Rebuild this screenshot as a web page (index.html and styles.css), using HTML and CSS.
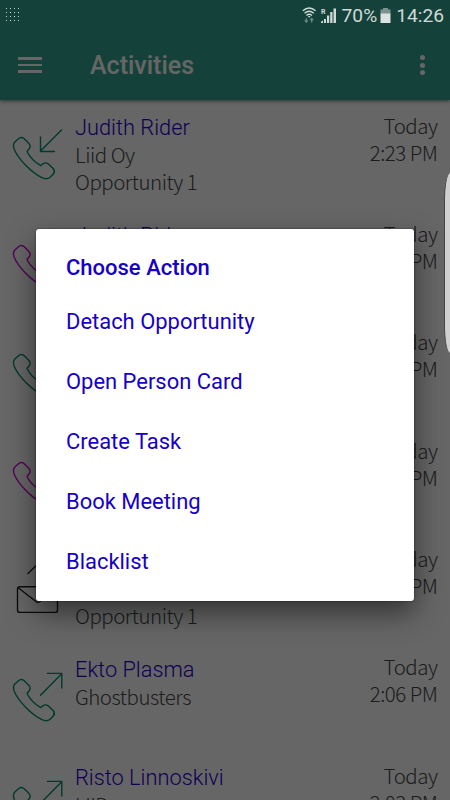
FILE: index.html
```html
<!DOCTYPE html>
<html lang="en">
<head>
<meta charset="utf-8">
<title>Activities</title>
<link rel="stylesheet" href="styles.css">
</head>
<body>
<svg width="0" height="0" class="defs" aria-hidden="true">
  <defs>
    <path id="phone" transform="translate(.5 -.5)" d="M14.1 41.8 L17.7 38.4 Q20.5 35.8 23.5 38 L28 42.6 Q31 45.7 28.5 48.6 Q26.8 50 26.6 51.2 C29 56 35 62 40.3 65.2 C41.5 63.5 43 62.1 45.6 62.4 Q47.5 62.8 49 64.5 L52.8 68.3 Q55 71 52.8 73.6 L49.6 76.8 Q46 79.5 41.5 77.2 C30 71.5 18 58.5 13.8 49 Q12 44.5 14.1 41.8 Z"/>
    <path id="in" d="M61.500 29 L40.5 50 M40.500 36 V50.500 H54.500"/>
    <path id="out" d="M40.500 52.2 L61.700 30.800 M47.500 30.400 H61.800 V45"/>
    <g id="mail"><rect x="17.5" y="51.8" width="40" height="25.6" rx="2.5"/><path d="M18.5 53 L36 66.5 Q38 68 40 66.5 L56.5 53 M28 38.5 L49 18 M38 18 H49 V32"/></g>
  </defs>
</svg>
<div class="screen">
  <header class="appbar">
    <div class="menu"><i></i><i></i><i></i></div>
    <h1>Activities</h1>
    <div class="more"><i></i><i></i><i></i></div>
  </header>
  <main class="list">
    <article class="row"><svg class="icon green"><use href="#phone"/><use href="#in"/></svg><div class="info"><b>Judith Rider</b><p>Liid Oy</p><p>Opportunity 1</p></div><div class="when">Today<br>2:23 PM</div></article>
    <article class="row"><svg class="icon pink"><use href="#phone"/><use href="#in"/></svg><div class="info"><b>Judith Rider</b></div><div class="when">Today<br>2:23 PM</div></article>
    <article class="row"><svg class="icon green"><use href="#phone"/></svg><div class="info"></div><div class="when">Today<br>2:23 PM</div></article>
    <article class="row"><svg class="icon pink"><use href="#phone"/></svg><div class="info"></div><div class="when">Today<br>2:23 PM</div></article>
    <article class="row"><svg class="icon dark"><use href="#mail"/></svg><div class="info"><b>&nbsp;</b><p>&nbsp;</p><p>Opportunity 1</p></div><div class="when">Today<br>2:23 PM</div></article>
    <article class="row"><svg class="icon green"><use href="#phone"/><use href="#out"/></svg><div class="info"><b>Ekto Plasma</b><p>Ghostbusters</p></div><div class="when">Today<br>2:06 PM</div></article>
    <article class="row"><svg class="icon green"><use href="#phone"/><use href="#out"/></svg><div class="info"><b>Risto Linnoskivi</b><p>LIID</p></div><div class="when">Today<br>2:03 PM</div></article>
  </main>
</div>
<div class="scrim">
  <section class="dialog">
    <h2>Choose Action</h2>
    <button>Detach Opportunity</button>
    <button>Open Person Card</button>
    <button>Create Task</button>
    <button>Book Meeting</button>
    <button>Blacklist</button>
  </section>
</div>
<div class="status">
  <svg class="dots" width="14" height="15" viewBox="0 0 14 15"><g fill="none" stroke="#b9c9c6" stroke-width="1" stroke-dasharray="1 3"><path d="M0 .5H14M0 4.5H14M0 8.5H14M0 12.5H14"/></g><path fill="#e4ecea" d="M4 4h1v1H4zM12 4h1v1h-1zM8 8h1v1H8zM4 12h1v1H4z"/></svg>
  <svg class="signals" width="36" height="17" viewBox="0 0 36 17">
    <g fill="none" stroke="#d0d9d7" stroke-width="1.4"><path d="M.8 3.8Q7.2-1.8 13.6 3.8M2.6 6.3Q7.2 2.2 11.8 6.3M4.5 8.5Q7.2 6.2 9.9 8.5"/></g>
    <path d="M5.8 9h2.8L7.2 10.8z" fill="#d0d9d7"/>
    <path d="M4.3 11v4M2.8 13.3 4.3 15 5.8 13.3M9.7 15.5v-4M8.2 13.2 9.7 11.5 11.2 13.2" fill="none" stroke="#6f8b85" stroke-width="1.2"/>
    <text x="19" y="6.600" class="roam">R</text>
    <path fill="#d0d9d7" d="M19 16v-1.200l2-1.300V16zM22 16v-4h2v4zM25 16V8.500h2.200V16zM28.200 16V5h2.300v11zM31.500 16V1.500H34V16z"/>
  </svg>
  <span class="pct">70%</span>
  <svg class="battery" width="11" height="15" viewBox="0 0 11 15"><path fill="#7b928e" d="M3 0h5v1.500h2.500V6H.5V1.500H3z"/><path fill="#dbe2e1" d="M.5 5.500h10V15H.5z"/></svg>
  <span class="clock">14:26</span>
</div>
<div class="edge"></div>
</body>
</html>
```
FILE: styles.css
```css
* { box-sizing: border-box; margin: 0; padding: 0; }
body { width: 450px; height: 800px; overflow: hidden; position: relative; background: #fff; font-family: Roboto, sans-serif; }
.defs { position: absolute; }
.screen { width: 450px; height: 800px; overflow: hidden; }
.appbar { height: 100px; padding: 30px 22px 0 18px; display: flex; align-items: center; background: #34a591; box-shadow: 0 1px 4px rgba(0,0,0,.55); position: relative; }
.menu { width: 24px; display: grid; gap: 4px; }
.menu i { height: 2.500px; background: #fff; }
.appbar h1 { margin-left: 48px; margin-top: 2px; flex: 1; font-size: 25px; line-height: 30px; font-weight: 500; color: #fff; }
.more { display: grid; gap: 2.400px; width: 11px; justify-items: center; }
.more i { width: 5px; height: 5px; border-radius: 50%; background: #fff; }
.list { padding-top: 1px; }
.row { height: 108.400px; display: flex; overflow: hidden; }
.icon { width: 75px; height: 108px; flex: none; fill: none; stroke-width: 1.400; stroke-linejoin: round; stroke-linecap: round; }
.green { stroke: #00916e; }
.pink { stroke: #d800d8; }
.dark { stroke: #202020; }
.info { flex: 1; padding-top: 14px; }
.info b { display: block; font-size: 21.800px; font-weight: 300; line-height: 26px; color: #2800d0; }
.info p, .when { font-family: "Noto Sans CJK JP", "Noto Sans", sans-serif; font-weight: 300; font-size: 20.500px; letter-spacing: -.5px; line-height: 27px; color: #484848; }
.when { padding: 10.500px 12.500px 0 0; text-align: right; }
.scrim { position: absolute; inset: 0; background: rgba(0,0,0,.6); display: flex; justify-content: center; align-items: flex-start; padding-top: 229px; }
.dialog { width: 378px; height: 372px; background: #fff; border-radius: 3px; padding: 24px 30px 0; box-shadow: 0 0 2px rgba(0,0,0,.6), 0 12px 28px rgba(0,0,0,.5); color: #1600c8; }
.dialog h2 { font-size: 22px; line-height: 30px; font-weight: 500; margin-bottom: 9px; }
.dialog button { display: block; width: 100%; height: 60px; border: 0; background: none; text-align: left; color: inherit; font: 400 21.950px/60px Roboto, sans-serif; }
.status { position: absolute; top: 0; left: 0; width: 450px; height: 30px; padding: 0 6px; display: flex; align-items: center; color: #d0d9d7; font-size: 19.200px; line-height: 30px; }
.pct, .clock { padding-top: 1px; }
.signals { margin-left: auto; margin-right: 4px; }
.roam { font: 700 7px Roboto, sans-serif; fill: #d0d9d7; }
.battery { margin: 0 5px 0 3px; }
.edge { position: absolute; right: 0; top: 173px; width: 6px; height: 180px; background: #d0d0d0; border-left: 1px solid #444; border-radius: 6px 0 0 6px / 28px 0 0 28px; }
```
